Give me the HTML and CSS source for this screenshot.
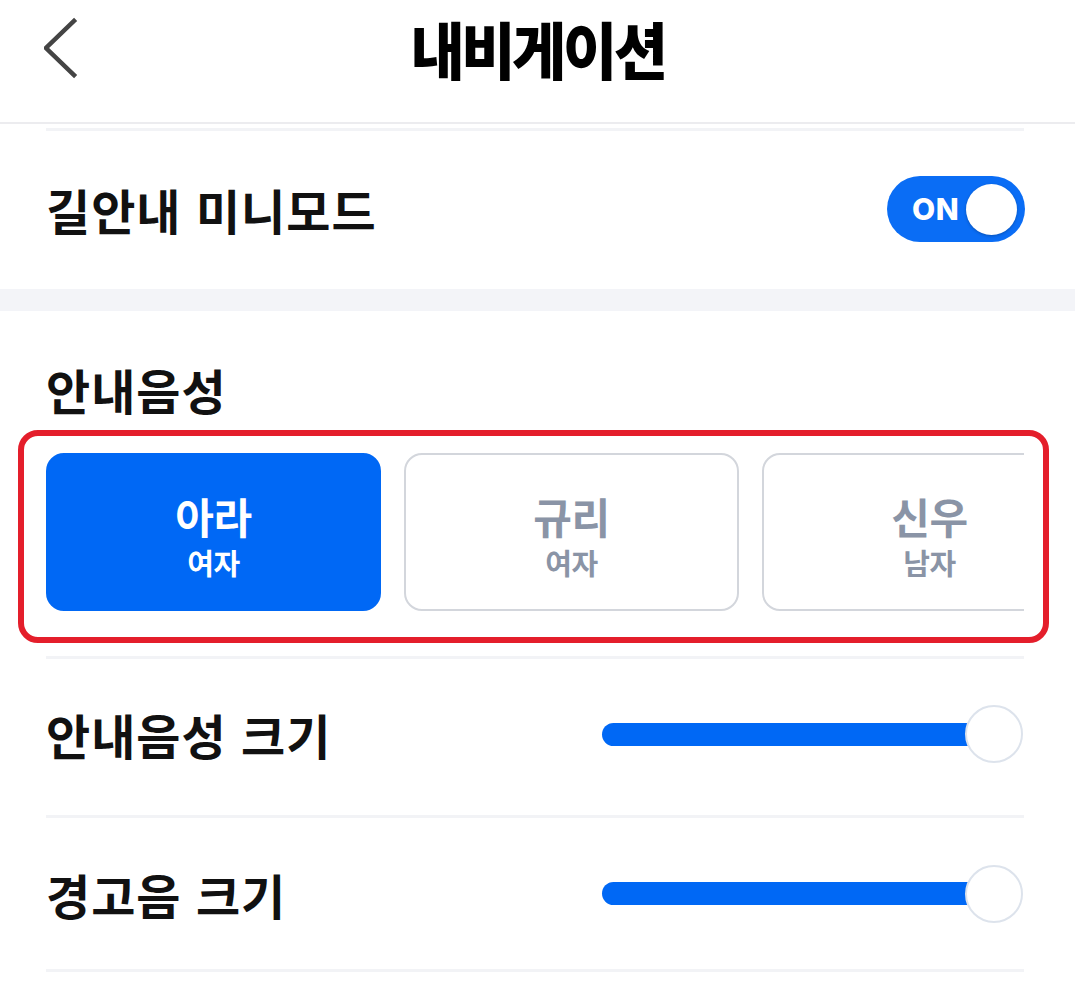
FILE: index.html
```html
<!DOCTYPE html>
<html lang="ko">
<head>
<meta charset="utf-8">
<link rel="stylesheet" href="styles.css">
</head>
<body>
<header class="topbar">
  <svg class="back" width="40" height="64" viewBox="0 0 40 64">
    <polyline points="31,21 3,48 31,75" transform="translate(-1,-16)" fill="none" stroke="#444" stroke-width="4.5" stroke-linecap="square" stroke-linejoin="miter"/>
  </svg>
  <h1 class="title">내비게이션</h1>
</header>

<section class="group first">
  <div class="row toggle-row">
    <span class="label">길안내 미니모드</span>
    <div class="toggle"><span class="toggle-text">ON</span><span class="toggle-knob"></span></div>
  </div>
</section>

<div class="band"></div>

<section class="group second">
  <h2 class="section-title">안내음성</h2>
  <div class="voices-wrap">
    <div class="voices">
      <div class="voice active"><span class="v-name">아라</span><span class="v-sub">여자</span></div>
      <div class="voice"><span class="v-name">규리</span><span class="v-sub">여자</span></div>
      <div class="voice"><span class="v-name">신우</span><span class="v-sub">남자</span></div>
    </div>
    <div class="highlight"></div>
  </div>
  <div class="row slider-row r1">
    <span class="label">안내음성 크기</span>
    <div class="slider"><div class="track"></div><div class="knob"></div></div>
  </div>
  <div class="row slider-row r2">
    <span class="label">경고음 크기</span>
    <div class="slider"><div class="track"></div><div class="knob"></div></div>
  </div>
</section>
</body>
</html>
```

FILE: styles.css
```css
* { box-sizing: border-box; }
html, body { margin: 0; padding: 0; background: #fff; }
body {
  width: 1075px;
  height: 989px;
  overflow: hidden;
  font-family: "Noto Sans CJK KR", "Noto Sans", sans-serif;
  color: #111;
}
.topbar {
  height: 124px;
  border-bottom: 2px solid #ececef;
  display: flex;
  align-items: center;
  justify-content: center;
  position: relative;
}
.back {
  position: absolute;
  left: 44px;
  top: 16px;
}
.title {
  margin: 0;
  font-size: 59px;
  font-weight: 900;
  letter-spacing: -3.5px;
  line-height: 1;
  color: #000;
  transform: scaleY(1.06);
  margin-top: -28px;
}
.group {
  padding: 0 51px 0 46px;
}
.group.first {
  padding-top: 4px;
}
.row {
  display: flex;
  align-items: center;
  justify-content: space-between;
  border-top: 3px solid #f2f3f6;
}
.toggle-row {
  height: 161px;
  padding-bottom: 2px;
}
.label {
  font-size: 48px;
  font-weight: 700;
  letter-spacing: 1px;
  color: #111;
}
.toggle {
  width: 138px;
  height: 66px;
  border-radius: 33px;
  background: #0a6df5;
  display: flex;
  align-items: center;
  justify-content: space-between;
  padding: 0 8px 0 25px;
  margin-right: -1px;
}
.toggle-text {
  font-family: Inter, "Liberation Sans", sans-serif;
  font-weight: 800;
  font-size: 30px;
  color: #fff;
  letter-spacing: 0.5px;
}
.toggle-knob {
  width: 51px;
  height: 51px;
  border-radius: 50%;
  background: #fff;
  box-shadow: 0 1px 3px rgba(0,0,0,0.25);
}
.band {
  height: 22px;
  background: #f3f4f8;
}
.section-title {
  margin: 48px 0 0;
  font-size: 48px;
  font-weight: 700;
  line-height: 60px;
  letter-spacing: 1px;
  color: #111;
}
.voices-wrap {
  position: relative;
  margin-top: 34px;
}
.voices {
  display: flex;
  gap: 23px;
  overflow: hidden;
  width: 978px;
}
.voice {
  flex: 0 0 335px;
  height: 158px;
  border-radius: 18px;
  border: 2px solid #d3d6dc;
  display: flex;
  flex-direction: column;
  align-items: center;
  justify-content: center;
  gap: 5px;
  color: #8a94a6;
  padding-top: 9px;
}
.voice.active {
  background: #0068f5;
  border-color: #0068f5;
  color: #fff;
}
.v-name {
  font-size: 42px;
  font-weight: 700;
  line-height: 46px;
  letter-spacing: -0.5px;
}
.v-sub {
  font-size: 29px;
  font-weight: 700;
  line-height: 36px;
  letter-spacing: -0.5px;
}
.highlight {
  position: absolute;
  top: -23px;
  left: -28px;
  right: -25px;
  bottom: -32px;
  border: 6px solid #e41e2b;
  border-radius: 20px;
  pointer-events: none;
}
.slider-row {
  margin-top: 45px;
  height: 159px;
  padding-bottom: 6px;
}
.slider-row.r2 {
  margin-top: 0;
  height: 157px;
  border-bottom: 3px solid #f2f3f6;
  padding-bottom: 0;
}
.slider {
  width: 422px;
  height: 58px;
  position: relative;
  display: flex;
  align-items: center;
}
.track {
  width: 400px;
  height: 23px;
  border-radius: 12px;
  background: #0068f5;
}
.knob {
  position: absolute;
  right: 1px;
  top: 0;
  width: 58px;
  height: 58px;
  border-radius: 50%;
  background: #fff;
  border: 2px solid #dde3ec;
}
```
